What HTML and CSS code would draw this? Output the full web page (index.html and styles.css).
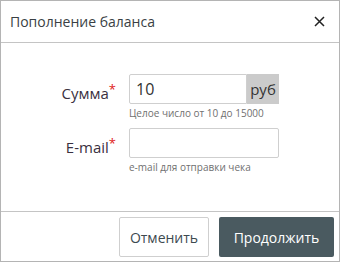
FILE: index.html
```html
<!DOCTYPE html>
<html lang="ru">
<head>
<meta charset="utf-8">
<link rel="stylesheet" href="styles.css">
</head>
<body>
<div class="dialog">
  <div class="header">
    <span class="title">Пополнение баланса</span>
    <button class="close" aria-label="Закрыть">
      <svg width="11" height="11" viewBox="0 0 11 11"><path d="M1 1L10 10M10 1L1 10" stroke="#222" stroke-width="1.5" fill="none"/></svg>
    </button>
  </div>
  <div class="body">
    <div class="row">
      <label class="label">Сумма<span class="req">*</span></label>
      <div class="field">
        <div class="group">
          <div class="input">10</div>
          <div class="suffix">руб</div>
        </div>
        <div class="hint">Целое число от 10 до 15000</div>
      </div>
    </div>
    <div class="row">
      <label class="label">E-mail<span class="req">*</span></label>
      <div class="field">
        <div class="group">
          <div class="input"></div>
        </div>
        <div class="hint">e-mail для отправки чека</div>
      </div>
    </div>
  </div>
  <div class="footer">
    <button class="btn cancel">Отменить</button>
    <button class="btn primary">Продолжить</button>
  </div>
</div>
</body>
</html>
```
FILE: styles.css
```css
html, body {
  margin: 0;
  padding: 0;
  background: #fff;
}
body {
  font-family: "Open Sans", "Liberation Sans", sans-serif;
  color: #333;
}
.dialog {
  width: 340px;
  height: 262px;
  box-sizing: border-box;
  border: 1px solid #b4b4b4;
  display: flex;
  flex-direction: column;
}
.header {
  height: 41px;
  border-bottom: 1px solid #c4c4c4;
  display: flex;
  align-items: center;
  justify-content: space-between;
  padding: 0 14px 0 9px;
}
.title {
  font-size: 14px;
  color: #3a3f44;
}
.close {
  border: 0;
  background: none;
  padding: 0;
  width: 11px;
  height: 11px;
  display: flex;
}
.body {
  height: 169px;
  border-bottom: 1px solid #c4c4c4;
  padding-top: 31px;
  box-sizing: border-box;
  display: flex;
  flex-direction: column;
  gap: 7px;
}
.row {
  display: flex;
  align-items: flex-start;
}
.label {
  width: 115px;
  text-align: right;
  font-size: 15px;
  color: #3a3040;
  line-height: 30px;
  margin-right: 13px;
}
.req {
  color: #e02020;
  font-size: 13px;
  vertical-align: 5px;
}
.group {
  display: flex;
  width: 150px;
  height: 30px;
  box-sizing: border-box;
}
.input {
  flex: 1;
  border: 1px solid #cfcfcf;
  border-radius: 2px 0 0 2px;
  font-size: 16px;
  line-height: 28px;
  padding-left: 6px;
  color: #333;
}
.group .input:only-child {
  border-radius: 2px;
}
.suffix {
  width: 32px;
  background: #cbcbcb;
  font-size: 15px;
  line-height: 30px;
  text-align: center;
  color: #333;
}
.hint {
  font-size: 10px;
  color: #707070;
  line-height: 15px;
  margin-top: 2px;
}
.footer {
  flex: 1;
  display: flex;
  justify-content: flex-end;
  align-items: flex-start;
  gap: 10px;
  padding: 5px 5px 0 0;
}
.btn {
  height: 40px;
  font-family: "Open Sans", "Liberation Sans", sans-serif;
  font-size: 14px;
  border-radius: 2px;
  padding: 0;
}
.cancel {
  width: 90px;
  background: #fff;
  border: 1px solid #cfcfcf;
  color: #3d4a50;
}
.primary {
  width: 115px;
  background: #4a5a60;
  border: 0;
  color: #fff;
}
```
